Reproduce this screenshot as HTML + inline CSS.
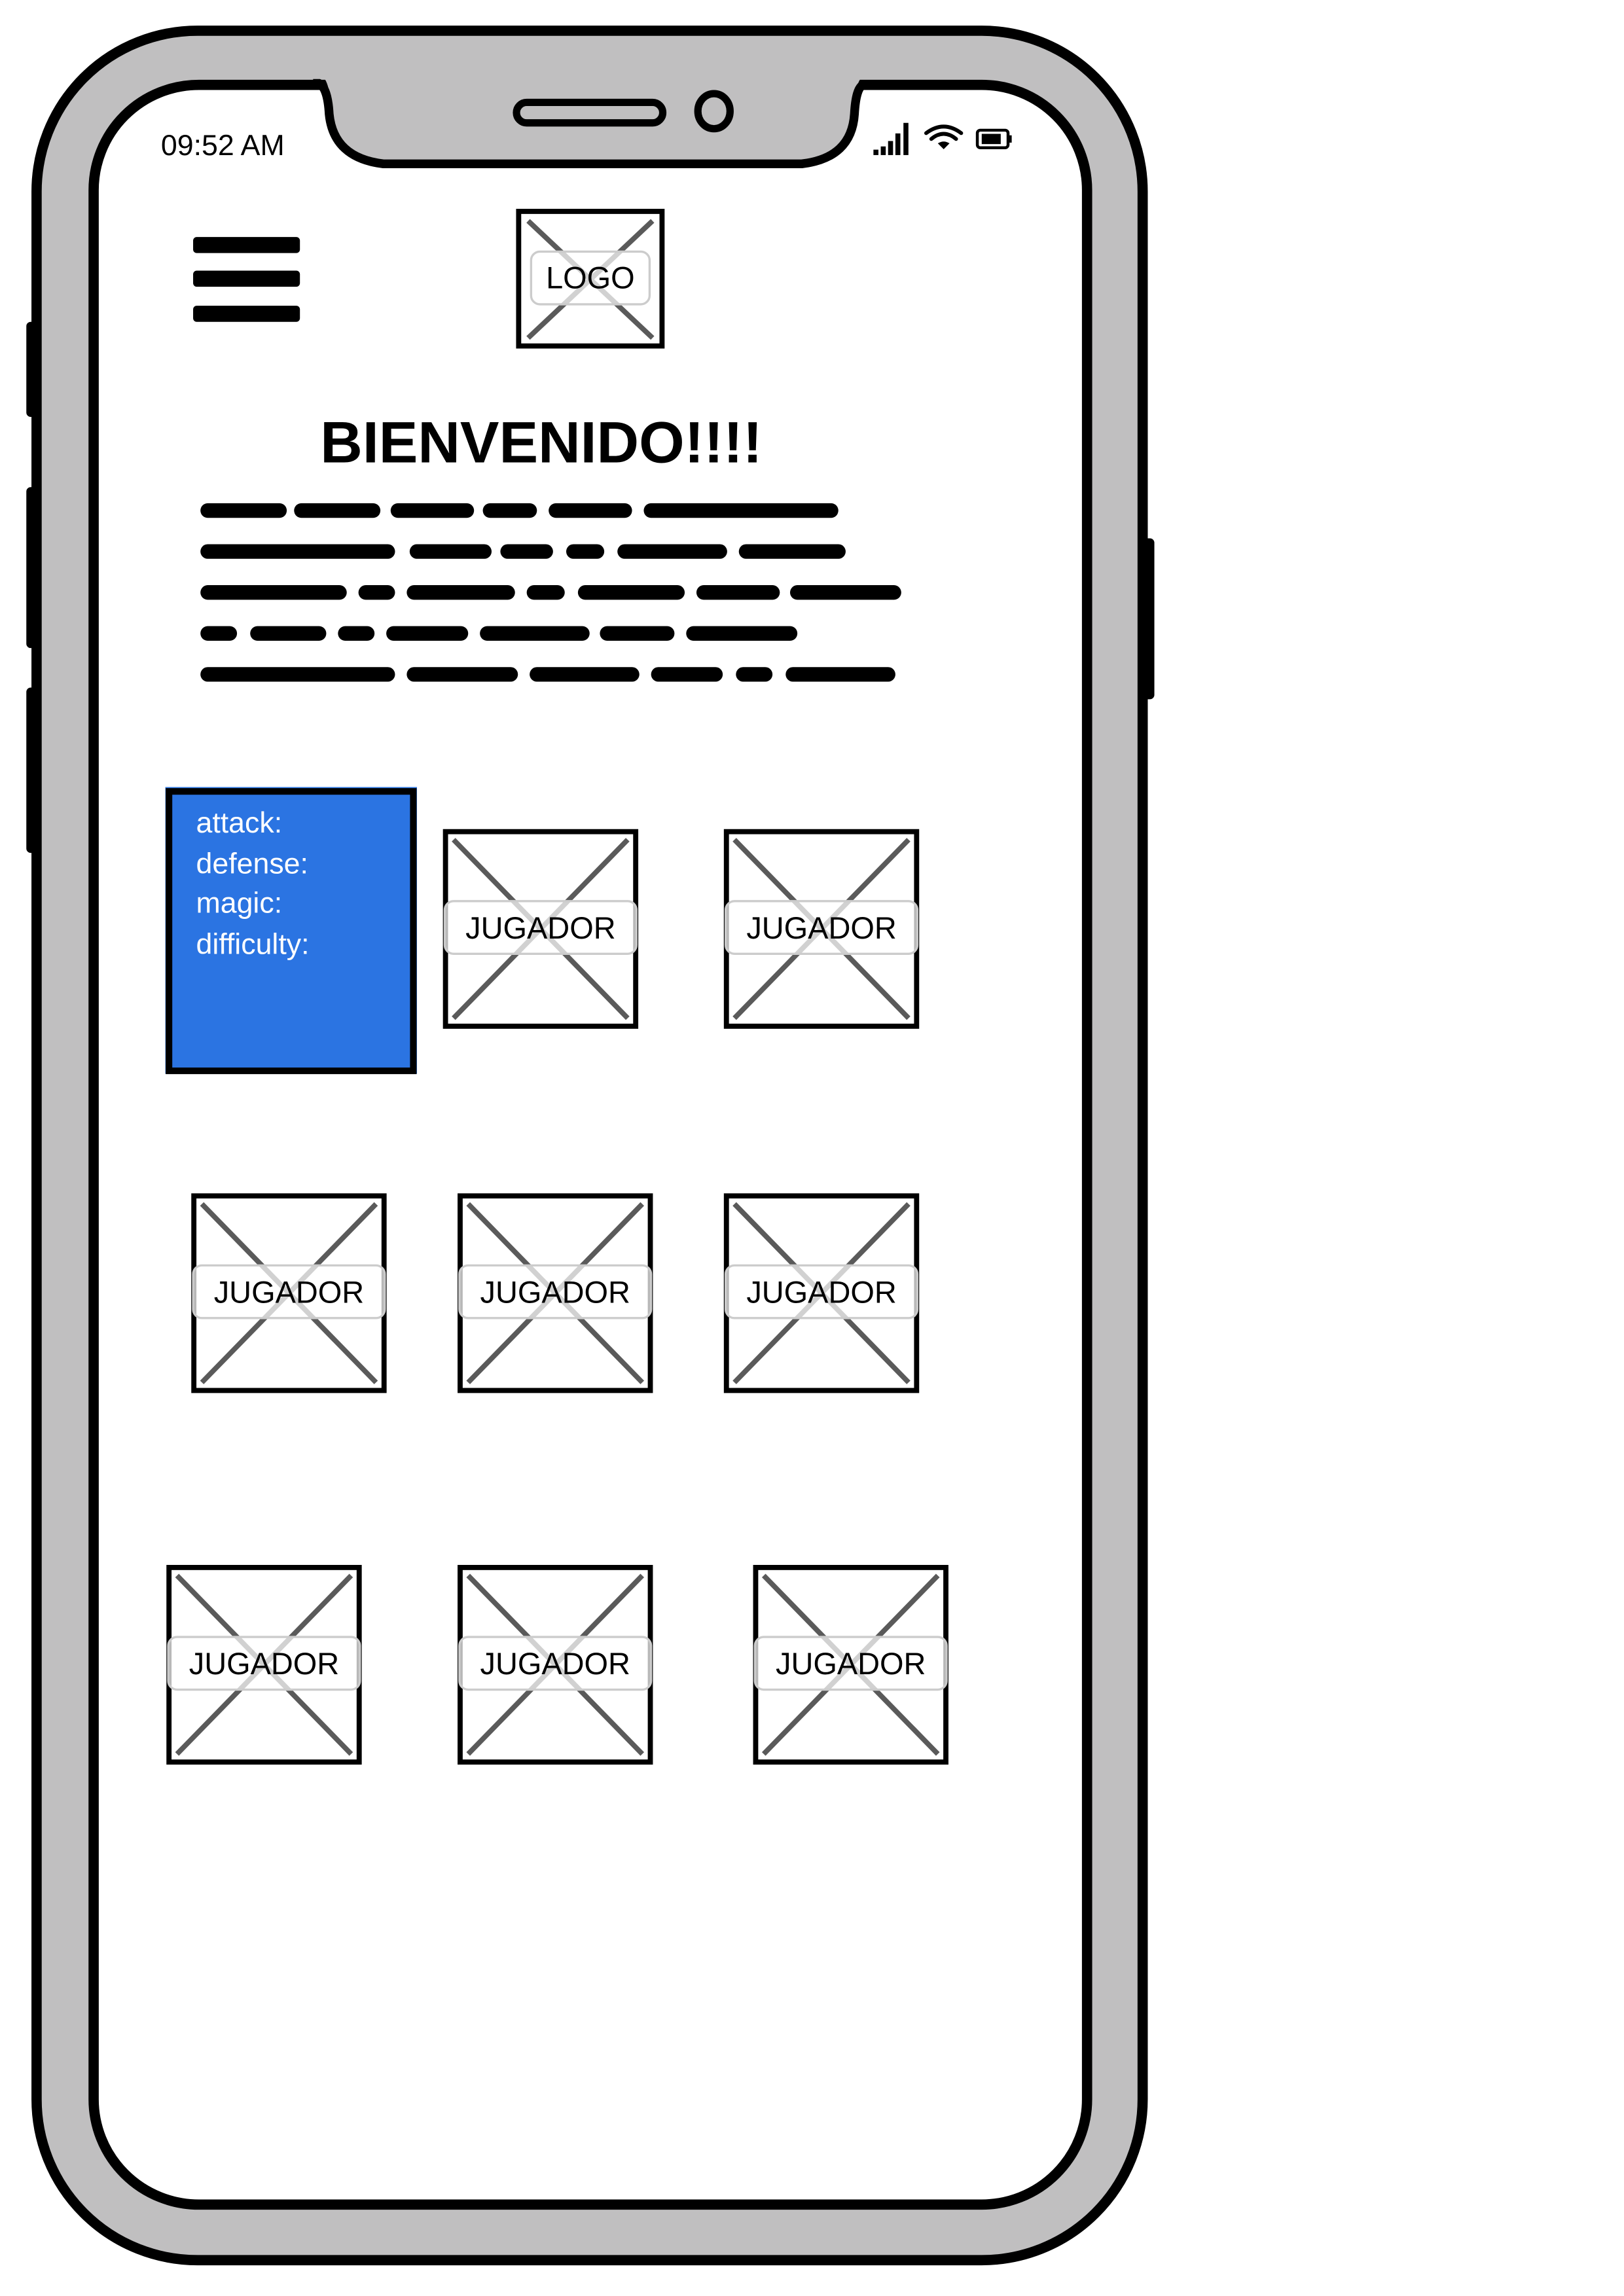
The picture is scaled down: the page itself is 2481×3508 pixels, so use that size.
<!DOCTYPE html>
<html><head><meta charset="utf-8"><style>
html,body{margin:0;padding:0;background:#fff;}
svg{display:block;}
text{font-family:"Liberation Sans",sans-serif;}
</style></head><body>
<svg width="2481" height="3508" viewBox="0 0 1110 1569.5" preserveAspectRatio="none" xmlns="http://www.w3.org/2000/svg">
<rect width="1110" height="1570" fill="#fff"/>
<!-- side buttons -->
<g fill="#000">
<rect x="18" y="220" width="9" height="65" rx="3"/>
<rect x="18" y="333" width="9" height="110" rx="3"/>
<rect x="18" y="470" width="9" height="113" rx="3"/>
<rect x="777" y="368" width="12" height="110" rx="3"/>
</g>
<!-- phone body -->
<rect x="25" y="21" width="756" height="1524" rx="110" fill="#c0bfc0" stroke="#000" stroke-width="7"/>
<!-- screen -->
<rect x="64" y="58" width="679" height="1449" rx="72" fill="#fff" stroke="#000" stroke-width="7"/>
<!-- notch -->
<path d="M212 54 L222 54 Q226 60 226 78 Q228 108 262 112 L548 112 Q582 108 584 78 Q584 60 588 54 L600 54 L600 40 L212 40 Z" fill="#c0bfc0"/>
<path d="M214 57 L218 57 Q224 60 225 78 Q228 108 262 112 L548 112 Q582 108 584 78 Q585 60 590 58 L598 58" fill="none" stroke="#000" stroke-width="6"/>
<rect x="353" y="70" width="100" height="14" rx="7" fill="#c0bfc0" stroke="#000" stroke-width="5"/>
<ellipse cx="488" cy="76" rx="11" ry="12" fill="#c0bfc0" stroke="#000" stroke-width="5"/>
<!-- status -->
<text x="110" y="106" font-size="20" fill="#000">09:52 AM</text>
<g fill="#000">
<rect x="597" y="102.3" width="3.4" height="3.7"/>
<rect x="602" y="100.1" width="3.4" height="5.9"/>
<rect x="607" y="96.4" width="3.4" height="9.6"/>
<rect x="612" y="91.2" width="3.4" height="14.8"/>
<rect x="617.5" y="84" width="3.4" height="22"/>
</g>
<g fill="none" stroke="#000" stroke-width="2.6" stroke-linecap="round">
<path d="M633 91 Q645 82 657 91"/>
<path d="M636.5 95 Q645 88 653.5 95"/>
</g>
<path d="M641 98 L645 102 L649 98 Q645 95.5 641 98 Z" fill="#000"/>
<rect x="668" y="89" width="21" height="12" rx="2" fill="none" stroke="#000" stroke-width="2"/>
<rect x="671" y="91.5" width="13" height="7" fill="#000"/>
<rect x="689.5" y="92.5" width="2" height="5" fill="#000"/>
<!-- hamburger -->
<g fill="#000">
<rect x="132" y="162" width="73" height="11" rx="2.5"/>
<rect x="132" y="185" width="73" height="11" rx="2.5"/>
<rect x="132" y="209" width="73" height="11" rx="2.5"/>
</g>
<!-- logo -->
<rect x="354.5" y="144.5" width="98" height="92" fill="#fff" stroke="#000" stroke-width="3.5"/>
<g stroke="#5a5a5a" stroke-width="3.5"><line x1="361" y1="151" x2="446" y2="231"/><line x1="446" y1="151" x2="361" y2="231"/></g>
<rect x="363" y="172" width="81" height="36" rx="6" fill="#fff" fill-opacity="0.72" stroke="#ccc" stroke-width="1.5"/>
<text x="403.5" y="197" font-size="21" text-anchor="middle" fill="#000">LOGO</text>
<!-- title -->
<text x="370" y="316" font-size="40" font-weight="bold" text-anchor="middle" fill="#000">BIENVENIDO!!!!</text>
<!-- scribbles -->
<g fill="#000">
<rect x="137" y="344" width="59" height="10" rx="5"/><rect x="201" y="344" width="59" height="10" rx="5"/><rect x="267" y="344" width="57" height="10" rx="5"/><rect x="330" y="344" width="37" height="10" rx="5"/><rect x="375" y="344" width="57" height="10" rx="5"/><rect x="440" y="344" width="133" height="10" rx="5"/>
<rect x="137" y="372" width="133" height="10" rx="5"/><rect x="280" y="372" width="56" height="10" rx="5"/><rect x="342" y="372" width="36" height="10" rx="5"/><rect x="387" y="372" width="26" height="10" rx="5"/><rect x="422" y="372" width="75" height="10" rx="5"/><rect x="505" y="372" width="73" height="10" rx="5"/>
<rect x="137" y="400" width="100" height="10" rx="5"/><rect x="245" y="400" width="25" height="10" rx="5"/><rect x="278" y="400" width="74" height="10" rx="5"/><rect x="360" y="400" width="26" height="10" rx="5"/><rect x="395" y="400" width="73" height="10" rx="5"/><rect x="476" y="400" width="57" height="10" rx="5"/><rect x="540" y="400" width="76" height="10" rx="5"/>
<rect x="137" y="428" width="25" height="10" rx="5"/><rect x="171" y="428" width="52" height="10" rx="5"/><rect x="231" y="428" width="25" height="10" rx="5"/><rect x="264" y="428" width="56" height="10" rx="5"/><rect x="328" y="428" width="75" height="10" rx="5"/><rect x="410" y="428" width="51" height="10" rx="5"/><rect x="469" y="428" width="76" height="10" rx="5"/>
<rect x="137" y="456" width="133" height="10" rx="5"/><rect x="278" y="456" width="76" height="10" rx="5"/><rect x="362" y="456" width="75" height="10" rx="5"/><rect x="445" y="456" width="49" height="10" rx="5"/><rect x="503" y="456" width="25" height="10" rx="5"/><rect x="537" y="456" width="75" height="10" rx="5"/>
</g>
<!-- blue card -->
<rect x="113" y="538" width="172" height="196" fill="#2e77e3"/>
<rect x="115.5" y="541" width="167" height="191" fill="#2b74e2" stroke="#000" stroke-width="4.5"/>
<g fill="#fff" font-size="20">
<text x="134" y="569">attack:</text>
<text x="134" y="597">defense:</text>
<text x="134" y="624">magic:</text>
<text x="134" y="652">difficulty:</text>
</g>
<!-- placeholders -->
<defs>
<g id="ph">
<rect x="1.5" y="1.5" width="130" height="133" fill="#fff" stroke="#000" stroke-width="3.5"/>
<g stroke="#5a5a5a" stroke-width="3.5"><line x1="7" y1="7" x2="126" y2="129"/><line x1="126" y1="7" x2="7" y2="129"/></g>
<rect x="1" y="49" width="131" height="36" rx="6" fill="#fff" fill-opacity="0.72" stroke="#ccc" stroke-width="1.5"/>
<text x="66.5" y="74.5" font-size="21" text-anchor="middle" fill="#000">JUGADOR</text>
</g>
</defs>
<use href="#ph" x="303" y="567"/>
<use href="#ph" x="495" y="567"/>
<use href="#ph" x="131" y="816"/>
<use href="#ph" x="313" y="816"/>
<use href="#ph" x="495" y="816"/>
<use href="#ph" x="114" y="1070"/>
<use href="#ph" x="313" y="1070"/>
<use href="#ph" x="515" y="1070"/>
</svg>
</body></html>
